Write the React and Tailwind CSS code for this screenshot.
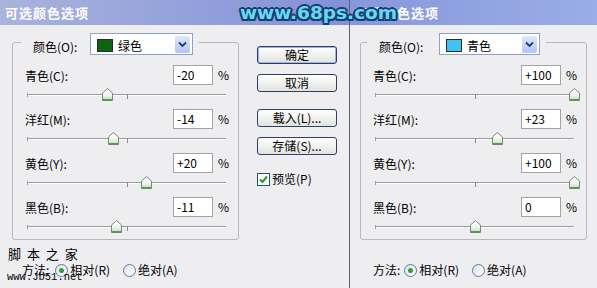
import React from "react";

function Thumb() {
  return (
    <svg width="11" height="13" viewBox="0 0 11 13">
      <defs>
        <linearGradient id="thumbg" x1="0" y1="0" x2="0" y2="1">
          <stop offset="0" stopColor="#ffffff" />
          <stop offset="0.6" stopColor="#eef3ee" />
          <stop offset="1" stopColor="#b6dbb0" />
        </linearGradient>
      </defs>
      <path d="M5.5 0.5 L10.5 5 L10.5 12.5 L0.5 12.5 L0.5 5 Z" fill="url(#thumbg)" stroke="#7b877b" />
      <path d="M1 11.8 H10" stroke="#3f9a3f" strokeWidth="1.4" />
    </svg>
  );
}

function Slider({ value }) {
  const p = (value + 100) / 2;
  return (
    <div className="h-[22px] pt-[9px] px-[2px]">
      <div className="relative h-[2px] border-t border-t-[#9a9a9a] border-b border-b-white">
        <div className="absolute left-0 top-[-2px] w-px h-[4px] bg-[#9a9a9a]" />
        <div className="absolute left-1/2 top-[-1px] w-px h-[5px] bg-[#8a8a8a]" />
        <div
          className="absolute top-[-7px] -ml-[5px] w-[11px] h-[13px]"
          style={{ left: `${p}%` }}
        >
          <Thumb />
        </div>
      </div>
    </div>
  );
}

function Row({ label, value, num }) {
  return (
    <div className="flex flex-col">
      <div className="flex items-center h-[20px]">
        <span className="flex-1 text-[12px] leading-[16px] text-black pt-[1px]">{label}</span>
        <div className="w-[40px] h-[20px] bg-white border border-[#a3a3a3] text-[12px] leading-[18px] pl-[3px] text-black">
          {value}
        </div>
        <span className="ml-[5px] w-[10px] text-[12px] leading-[16px] text-black">%</span>
      </div>
      <Slider value={num} />
    </div>
  );
}

function Dropdown({ swatch, label, w }) {
  return (
    <div className={`relative h-[22px] ${w} bg-white border border-[#8ea4bf] flex items-center pl-[6px] pt-[2px] mb-[-4px]`}>
      <div className={`w-[16px] h-[13px] border border-[#2a2a2a] ${swatch}`} />
      <span className="ml-[5px] text-[12px] leading-[16px] text-black pt-[2px]">{label}</span>
      <div className="absolute right-[2px] top-[2px] w-[15px] h-[17px] bg-gradient-to-b from-[#dfe7fc] to-[#b3c5f1] rounded-[2px] flex items-center justify-center">
        <svg width="9" height="7" viewBox="0 0 9 7">
          <path d="M1 1.5 L4.5 5 L8 1.5" stroke="#1f3b7a" strokeWidth="1.8" fill="none" />
        </svg>
      </div>
    </div>
  );
}

function Radio({ checked }) {
  return (
    <span className="w-[13px] h-[13px] rounded-full border border-[#5b7aa3] bg-gradient-to-br from-[#dde2e8] to-white flex items-center justify-center">
      {checked && <span className="w-[5px] h-[5px] rounded-full bg-[#3b9b3b]" />}
    </span>
  );
}

function Group({ legendMl, labelW, dd, rows }) {
  return (
    <fieldset className="w-[227px] border border-[#b9b9b9] rounded-[3px] p-0 mt-[8px]">
      <legend className={`${legendMl} pl-[12px] pr-[6px]`}>
        <div className="flex items-start h-[18px]">
          <span className={`${labelW} mt-[6px] text-[12px] leading-[16px] text-black`}>颜色(O):</span>
          <Dropdown {...dd} />
        </div>
      </legend>
      <div className="pl-[12px] pr-[10px] pt-[14px] flex flex-col gap-[2px]">
        {rows.map((r) => (
          <Row key={r.label} {...r} />
        ))}
      </div>
    </fieldset>
  );
}

function Method({ ml, gap }) {
  return (
    <div className={`mt-[22px] h-[16px] flex items-center ${ml} text-[12px] leading-[16px] text-black`}>
      <span>方法:</span>
      <span className={gap}><Radio checked /></span>
      <span className="ml-[2px]">相对(R)</span>
      <span className="ml-[13px]"><Radio /></span>
      <span className="ml-[2px]">绝对(A)</span>
    </div>
  );
}

function Btn({ children, def }) {
  return (
    <div
      className={`w-[80px] h-[18px] rounded-[3px] border border-[#2d3f66] bg-gradient-to-b from-white to-[#e2e2de] text-[12px] leading-[16px] text-black text-center ${def ? "shadow-[inset_0_0_0_1px_#9db6e8]" : ""}`}
    >
      {children}
    </div>
  );
}

export default function App() {
  const leftRows = [
    { label: "青色(C):", value: "-20", num: -20 },
    { label: "洋红(M):", value: "-14", num: -14 },
    { label: "黄色(Y):", value: "+20", num: 20 },
    { label: "黑色(B):", value: "-11", num: -11 },
  ];
  const rightRows = [
    { label: "青色(C):", value: "+100", num: 100 },
    { label: "洋红(M):", value: "+23", num: 23 },
    { label: "黄色(Y):", value: "+100", num: 100 },
    { label: "黑色(B):", value: "0", num: 0 },
  ];
  return (
    <div className="relative w-[597px] h-[288px] overflow-hidden flex bg-[#eeeef0] font-['Noto_Sans_CJK_SC','Noto_Sans',sans-serif]">
      {/* Left dialog */}
      <div className="w-[349px] flex flex-col">
        <div className="h-[25px] bg-gradient-to-r from-[#a9b3dd] to-[#8291d8] pl-[5px] text-white text-[13px] font-bold leading-[25px] tracking-[1px]">
          可选颜色选项
        </div>
        <div className="flex pl-[12px]">
          <div className="flex flex-col">
            <Group
              legendMl="ml-[8px]"
              labelW="w-[57px]"
              dd={{ swatch: "bg-[#0f6414]", label: "绿色", w: "w-[103px]" }}
              rows={leftRows}
            />
            <Method ml="ml-[10px]" gap="ml-[6px]" />
          </div>
          <div className="ml-[18px] pt-[21px] flex flex-col">
            <Btn def>确定</Btn>
            <div className="mt-[10px]"><Btn>取消</Btn></div>
            <div className="mt-[17px]"><Btn>载入(L)...</Btn></div>
            <div className="mt-[10px]"><Btn>存储(S)...</Btn></div>
            <div className="mt-[17px] flex items-center h-[14px]">
              <span className="w-[13px] h-[13px] border border-[#1c5180] bg-white flex items-center justify-center">
                <svg width="9" height="9" viewBox="0 0 9 9">
                  <path d="M1 4.5 L3.5 7 L8 1.5" stroke="#21a121" strokeWidth="2" fill="none" />
                </svg>
              </span>
              <span className="ml-[2px] text-[12px] leading-[16px] text-black">预览(P)</span>
            </div>
          </div>
        </div>
      </div>

      {/* Right dialog */}
      <div className="flex-1 flex flex-col border-l border-l-[#5c6272]">
        <div className="h-[25px] bg-gradient-to-r from-[#8797dc] to-[#9badE6] pl-[5px] text-white text-[13px] font-bold leading-[25px] tracking-[1px]">
          可选颜色选项
        </div>
        <div className="flex flex-col pl-[10px]">
          <Group
            legendMl="ml-[6px]"
            labelW="w-[60px]"
            dd={{ swatch: "bg-[#3fc3f3]", label: "青色", w: "w-[101px]" }}
            rows={rightRows}
          />
          <Method ml="ml-[13px]" gap="ml-[4px]" />
        </div>
      </div>

      {/* Watermarks */}
      <div className="absolute left-[240px] top-[2px] font-['DejaVu_Sans',sans-serif] font-bold text-[18.5px] leading-[21px] text-[#66d8f6] [text-shadow:-2px_0_#183f6c,2px_0_#183f6c,0_-2px_#183f6c,0_2px_#183f6c,-1.5px_-1.5px_#183f6c,1.5px_1.5px_#183f6c,-1.5px_1.5px_#183f6c,1.5px_-1.5px_#183f6c]">
        www.68ps.com
      </div>
      <div className="absolute left-[8px] top-[247px] text-[13px] leading-[14px] tracking-[1.5px] text-black">
        脚 本 之 家
      </div>
      <div className="absolute left-[7px] top-[271px] font-['Liberation_Mono',monospace] text-[10.5px] leading-[12px] text-black">
        www.Jb51.net
      </div>
    </div>
  );
}
